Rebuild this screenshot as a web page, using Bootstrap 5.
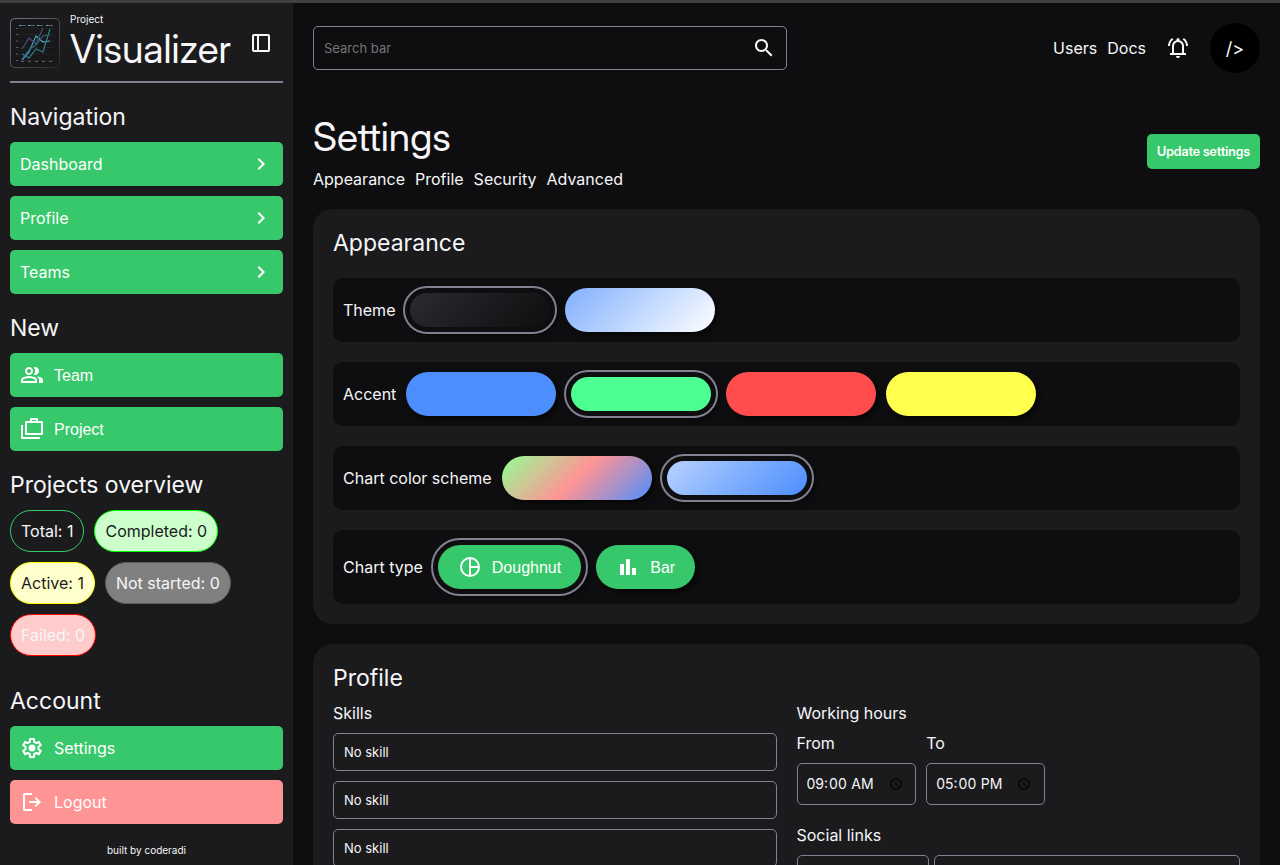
<!DOCTYPE html>
<html lang="en">
<head>
<meta charset="utf-8">
<meta name="viewport" content="width=device-width, initial-scale=1">
<title>Settings - Project Visualizer</title>
<link href="https://cdn.jsdelivr.net/npm/bootstrap@5.3.0/dist/css/bootstrap.min.css" rel="stylesheet">
<style>
  :root { --bg: #0e0e10; --panel: #1b1b1d; --line: #838091; --ink: #f6f6f8; --accent: #37c86b; --gap: 10px; }
  body { background: var(--bg); color: var(--ink); font: 400 16px/19px Inter, sans-serif; border-top: 3px solid #404040; }
  a { color: inherit; text-decoration: none; }
  h1, h2, h3, p { margin: 0; font-weight: 400; }
  h1 { font-family: "Inter Display", Inter, sans-serif; font-size: 39px; line-height: 48px; }
  h2 { font-size: 23px; line-height: 29px; }
  h3 { font-size: 16px; line-height: 20px; }
  svg { display: block; width: 24px; height: 24px; fill: currentColor; flex: none; }
  .g10 { gap: var(--gap); }
  .g20 { gap: 20px; }
  .sidebar { width: 293px; background: var(--panel); padding: 10px 10px 9px; overflow: hidden; }
  .brand { border-bottom: 2px solid var(--line); padding-bottom: 8px; }
  .brand-logo { width: 50px; height: 50px; }
  .brand-text small { display: block; font-size: 10px; line-height: 12px; }
  .brand-toggle { margin: 0 10px 0 auto; }
  .plain-btn { background: none; border: 0; padding: 0; color: inherit; }
  .side-btn { display: flex; align-items: center; gap: var(--gap); width: 100%; height: 44px; padding: 0 10px; border: 0; border-radius: 5px; background: var(--accent); color: #fff; text-align: left; flex: none; }
  .side-btn.danger { background: #ff9494; }
  .arial { font-family: "Liberation Sans", Arial, sans-serif; }
  .pill { border: 1px solid var(--accent); border-radius: 21px; padding: 0 10px; line-height: 40px; }
  .pill-done { background: #cfc; border-color: #0f0; color: #1b1b1d; }
  .pill-active { background: #ffc; border-color: #ff0; color: #1b1b1d; }
  .pill-idle { background: #808080; border-color: #5c5c5c; }
  .pill-failed { background: #fcc; border-color: #f00; }
  .credit { font-size: 10px; line-height: 12px; }
  .main-pane { padding: 20px; overflow-y: auto; scrollbar-width: none; }
  .main-pane::-webkit-scrollbar { display: none; }
  .search-box { border: 1px solid var(--line); border-radius: 5px; height: 44px; padding: 0 10px; }
  .search-box input { background: none; border: 0; padding: 0; outline: 0; color: var(--ink); font-size: 13px; }
  .search-box input::placeholder { color: #757575; }
  .avatar { width: 50px; height: 50px; background: #000; font-size: 18px; }
  .page-title { margin: 40px 0 20px; }
  .section-links { padding-top: 9px; }
  .update-btn { background: var(--accent); color: #fff; border: 0; border-radius: 5px; font-family: "Inter Display", Inter, sans-serif; font-size: 13px; font-weight: 600; line-height: 15px; padding: 10px; }
  .panel { background: var(--panel); border-radius: 20px; padding: 20px; }
  .option-row { background: var(--bg); border-radius: 10px; padding: 10px; }
  .swatch, .chart-btn { border: 0; border-radius: 22px; height: 44px; box-shadow: 3px 3px 5px rgba(0,0,0,.6); }
  .swatch { width: 150px; }
  .ring { padding: 5px; border-radius: 27px; outline: 2px solid var(--line); box-shadow: 3px 3px 5px rgba(0,0,0,.6); }
  .ring > * { box-shadow: none; display: flex; }
  .ring .swatch { width: 140px; height: 34px; }
  .chart-btn { display: flex; align-items: center; gap: var(--gap); padding: 0 20px; background: var(--accent); color: #fff; }
  .sw-dark { background: linear-gradient(135deg, #2b2b30, #0e0e10); }
  .sw-light { background: linear-gradient(135deg, #80afff, #fff); }
  .sw-blue { background: #4d8eff; }
  .sw-green { background: #4dff91; }
  .sw-red { background: #ff4d4d; }
  .sw-yellow { background: #ffff4d; }
  .sw-multi { background: linear-gradient(135deg, #94ff94, #ff9494, #4d8eff); }
  .sw-mono { background: linear-gradient(135deg, #b8d2ff, #80afff, #4d8eff); }
  .profile-grid { display: grid; grid-template-columns: 1fr 1fr; column-gap: 20px; }
  .field { appearance: none; background: transparent; color: var(--ink); border: 1px solid var(--line); border-radius: 5px; padding: 10px; font-size: 13px; line-height: 16px; height: 38px; min-width: 0; }
  .field option { background: var(--panel); }
  .time-field { height: 42px; font-size: 14px; padding: 9px; }
  .time-label { line-height: 20px; }
  .hours { margin-bottom: 10px; }
  .social-row { display: grid; grid-template-columns: 132px 1fr; gap: 5px; }
</style>
</head>
<body class="vh-100 overflow-hidden d-flex">
  <aside class="sidebar d-flex flex-column g20 flex-shrink-0">
    <header class="brand d-flex align-items-center g10">
      <svg class="brand-logo" viewBox="0 0 50 50" fill="none" aria-hidden="true">
        <defs><linearGradient id="edge" x2="1" y2="1"><stop stop-color="#77777b"/><stop offset="1" stop-color="#29292c"/></linearGradient></defs>
        <rect x=".5" y=".5" width="49" height="49" rx="4" fill="#18181a" stroke="url(#edge)"/>
        <path d="M8 10.500h36M8 16.500h36M8 23h36M8 29.500h36M8 36h36M8 42.500h36" stroke="#222225"/>
        <path d="M6 10.500h2M6 16.500h2M6 23h2M6 29.500h2M6 36h2M6 42.500h2M11 43.500h3M18 43.500h3M25 43.500h3M32 43.500h3M39 43.500h3M11 7.500h5M20 7.500h5M29 7.500h4M38 7.500h5" stroke="#5c5e62"/>
        <path d="M9 7.500h2M18 7.500h2M27 7.500h2M36 7.500h2" stroke="#4cb8cf"/>
        <g fill="none" stroke-width="1.200"><path d="M12 42l7-8 7-16 7 6 7-1" stroke="#41a9b4"/><path d="M12 36l7 4 7-9 7 3 7-23" stroke="#2f7d90"/><path d="M12 31l7-11 7 6 7-16" stroke="#40517a"/><path d="M12 41l8-10 6-4 7-9 7-1" stroke="#35637f"/></g>
      </svg>
      <div class="brand-text"><small>Project</small><h1>Visualizer</h1></div>
      <button class="plain-btn brand-toggle" aria-label="Toggle sidebar"><svg viewBox="0 0 24 24"><path fill-rule="evenodd" d="M5 21q-.825 0-1.412-.587T3 19V5q0-.825.588-1.412T5 3h14q.825 0 1.413.588T21 5v14q0 .825-.587 1.413T19 21zm3-2V5H5v14zm2 0h9V5h-9z"/></svg></button>
    </header>

    <nav class="d-flex flex-column g10" aria-label="Navigation">
      <h2>Navigation</h2>
      <a class="side-btn justify-content-between" href="#">Dashboard <svg viewBox="0 0 24 24"><path d="M10 6L8.590 7.410 13.170 12l-4.580 4.590L10 18l6-6z"/></svg></a>
      <a class="side-btn justify-content-between" href="#">Profile <svg viewBox="0 0 24 24"><path d="M10 6L8.590 7.410 13.170 12l-4.580 4.590L10 18l6-6z"/></svg></a>
      <a class="side-btn justify-content-between" href="#">Teams <svg viewBox="0 0 24 24"><path d="M10 6L8.590 7.410 13.170 12l-4.580 4.590L10 18l6-6z"/></svg></a>
    </nav>

    <section class="d-flex flex-column g10">
      <h2>New</h2>
      <button class="side-btn arial"><svg viewBox="0 0 24 24"><path fill-rule="evenodd" d="M1 20v-2.800q0-.85.438-1.562T2.600 14.550q1.550-.775 3.150-1.162T9 13t3.250.388t3.150 1.162q.725.375 1.163 1.088T17 17.200V20zm18 0v-3q0-1.100-.612-2.113T16.650 13.150q1.275.15 2.400.513t2.100.887q.9.5 1.375 1.112T23 17v3zM9 12q-1.650 0-2.825-1.175T5 8t1.175-2.825T9 4t2.825 1.175T13 8t-1.175 2.825T9 12m10-4q0 1.650-1.175 2.825T15 12q-.275 0-.7-.062t-.7-.138q.675-.8 1.038-1.775T15 8t-.362-2.025T13.600 4.200q.35-.125.7-.163T15 4q1.650 0 2.825 1.175T19 8M3 18h12v-.8q0-.275-.137-.5t-.363-.35q-1.350-.675-2.725-1.012T9 15t-2.775.338T3.500 16.350q-.225.125-.363.35T3 17.200zm6-8q.825 0 1.413-.587T11 8t-.587-1.412T9 6t-1.412.588T7 8t.588 1.413T9 10"/></svg>Team</button>
      <button class="side-btn arial"><svg viewBox="0 0 24 24"><path d="M2 8v13h18M6 5h16v12H6zM11 5V2h6v3" fill="none" stroke="currentColor" stroke-width="2" stroke-linejoin="round"/></svg>Project</button>
    </section>

    <section class="d-flex flex-column g10">
      <h2>Projects overview</h2>
      <div class="d-flex flex-wrap g10">
        <span class="pill">Total: 1</span>
        <span class="pill pill-done">Completed: 0</span>
        <span class="pill pill-active">Active: 1</span>
        <span class="pill pill-idle">Not started: 0</span>
        <span class="pill pill-failed">Failed: 0</span>
      </div>
    </section>

    <section class="d-flex flex-column g10 mt-auto">
      <h2>Account</h2>
      <a class="side-btn" href="#"><svg viewBox="0 0 24 24"><path fill-rule="evenodd" d="M9.250 22l-.4-3.200q-.325-.125-.612-.3t-.563-.375L4.700 19.375l-2.750-4.750l2.575-1.950Q4.500 12.500 4.500 12.337v-.675q0-.162.025-.337L1.950 9.375l2.750-4.750l2.975 1.250q.275-.2.575-.375t.6-.3l.4-3.200h5.500l.4 3.200q.325.125.613.3t.562.375l2.975-1.250l2.750 4.750l-2.575 1.950q.025.175.025.338v.674q0 .163-.05.338l2.575 1.950l-2.750 4.750l-2.950-1.250q-.275.2-.575.375t-.6.3l-.4 3.200zM11 20h1.975l.35-2.650q.775-.2 1.438-.587t1.212-.938l2.475 1.025l.975-1.700l-2.150-1.625q.125-.35.175-.737T17.500 12t-.05-.787t-.175-.738l2.150-1.625l-.975-1.700l-2.475 1.050q-.55-.575-1.212-.962t-1.438-.588L13 4h-1.975l-.35 2.650q-.775.2-1.437.588t-1.213.937L5.550 7.150l-.975 1.700l2.150 1.600q-.125.375-.175.75t-.05.8q0 .4.05.775t.175.75l-2.150 1.625l.975 1.700l2.475-1.050q.55.575 1.213.963t1.437.587z"/><circle cx="12" cy="12" r="3.400"/></svg>Settings</a>
      <button class="side-btn danger"><svg viewBox="0 0 24 24"><path d="M5 21q-.825 0-1.412-.587T3 19V5q0-.825.588-1.412T5 3h7v2H5v14h7v2zm11-4l-1.375-1.450l2.550-2.550H9v-2h8.175l-2.550-2.550L16 7l5 5z"/></svg>Logout</button>
    </section>
    <p class="credit text-center">built by <a href="#">coderadi</a></p>
  </aside>

  <main class="main-pane flex-grow-1">
    <header class="d-flex align-items-center justify-content-between">
      <form class="search-box w-50 d-flex align-items-center" role="search">
        <input class="flex-grow-1" type="search" placeholder="Search bar" aria-label="Search">
        <button class="plain-btn" type="button" aria-label="Search"><svg viewBox="0 0 24 24"><path d="M15.500 14h-.79l-.28-.27C15.410 12.590 16 11.110 16 9.500 16 5.910 13.090 3 9.500 3S3 5.910 3 9.500 5.910 16 9.500 16c1.610 0 3.090-.59 4.230-1.570l.27.28v.79l5 4.990L20.490 19l-4.990-5zm-6 0C7.010 14 5 11.990 5 9.500S7.010 5 9.500 5 14 7.010 14 9.500 11.990 14 9.500 14z"/></svg></button>
      </form>
      <div class="d-flex align-items-center g20">
        <nav class="d-flex g10"><a href="#">Users</a><a href="#">Docs</a></nav>
        <button class="plain-btn" aria-label="Notifications"><svg viewBox="0 0 24 24"><path fill-rule="evenodd" d="M4 19v-2h2v-7q0-2.075 1.250-3.687T10.500 4.200v-.7q0-.625.438-1.062T12 2t1.063.438T13.500 3.500v.7q2 .5 3.250 2.113T18 10v7h2v2zm8 3q-.825 0-1.412-.587T10 20h4q0 .825-.587 1.413T12 22m-4-5h8v-7q0-1.650-1.175-2.825T12 6T9.175 7.175T8 10zm-6-7q0-2.500 1.113-4.587T6.100 1.950l1.175 1.600q-1.500 1.100-2.387 2.775T4 10zm18 0q0-2-.888-3.675T16.725 3.550l1.175-1.600q1.875 1.375 2.988 3.463T22 10z"/></svg></button>
        <a class="avatar rounded-circle d-flex align-items-center justify-content-center" href="#">/&gt;</a>
      </div>
    </header>

    <div class="page-title d-flex align-items-center justify-content-between">
      <div class="d-flex flex-column">
        <h1>Settings</h1>
        <nav class="section-links d-flex g10"><a href="#appearance">Appearance</a><a href="#profile">Profile</a><a href="#security">Security</a><a href="#advanced">Advanced</a></nav>
      </div>
      <button class="update-btn">Update settings</button>
    </div>

    <div class="d-flex flex-column g20">
      <section class="panel d-flex flex-column g20" id="appearance">
        <h2>Appearance</h2>
        <div class="option-row d-flex align-items-center g10">
          <span>Theme</span>
          <span class="ring"><button class="swatch sw-dark" aria-label="Dark" aria-pressed="true"></button></span>
          <button class="swatch sw-light" aria-label="Light"></button>
        </div>
        <div class="option-row d-flex align-items-center g10">
          <span>Accent</span>
          <button class="swatch sw-blue" aria-label="Blue"></button>
          <span class="ring"><button class="swatch sw-green" aria-label="Green" aria-pressed="true"></button></span>
          <button class="swatch sw-red" aria-label="Red"></button>
          <button class="swatch sw-yellow" aria-label="Yellow"></button>
        </div>
        <div class="option-row d-flex align-items-center g10">
          <span>Chart color scheme</span>
          <button class="swatch sw-multi" aria-label="Multicolor"></button>
          <span class="ring"><button class="swatch sw-mono" aria-label="Monochrome" aria-pressed="true"></button></span>
        </div>
        <div class="option-row d-flex align-items-center g10">
          <span>Chart type</span>
          <span class="ring"><button class="chart-btn arial" aria-pressed="true"><svg viewBox="0 0 24 24"><path d="M12 3v18M12 12h9" stroke="currentColor" stroke-width="2"/><circle cx="12" cy="12" r="9" fill="none" stroke="currentColor" stroke-width="2"/></svg>Doughnut</button></span>
          <button class="chart-btn arial"><svg viewBox="0 0 24 24"><path d="M4 9h4v11H4zM10 4h4v16h-4zM16 13h4v7h-4z"/></svg>Bar</button>
        </div>
      </section>

      <section class="panel d-flex flex-column g10" id="profile">
        <h2>Profile</h2>
        <div class="profile-grid">
          <div class="d-flex flex-column g10">
            <h3>Skills</h3>
            <select class="field" aria-label="Skill 1"><option>No skill</option></select>
            <select class="field" aria-label="Skill 2"><option>No skill</option></select>
            <select class="field" aria-label="Skill 3"><option>No skill</option></select>
          </div>
          <div class="d-flex flex-column g10">
            <h3>Working hours</h3>
            <div class="hours d-flex g10">
              <div class="d-flex flex-column g10"><label class="time-label" for="from">From</label><input class="field time-field" id="from" type="time" value="09:00"></div>
              <div class="d-flex flex-column g10"><label class="time-label" for="to">To</label><input class="field time-field" id="to" type="time" value="17:00"></div>
            </div>
            <h3>Social links</h3>
            <div class="social-row">
              <input class="field" type="text" aria-label="Link name">
              <input class="field" type="url" aria-label="Link address">
            </div>
          </div>
        </div>
      </section>
    </div>
  </main>
  <script src="https://cdn.jsdelivr.net/npm/bootstrap@5.3.0/dist/js/bootstrap.bundle.min.js"></script>
</body>
</html>
